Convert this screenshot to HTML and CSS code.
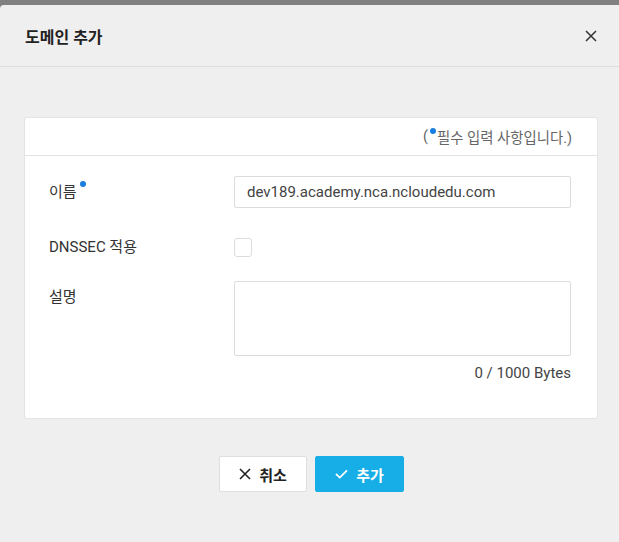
FILE: index.html
```html
<!DOCTYPE html>
<html lang="ko">
<head>
<meta charset="utf-8">
<link rel="stylesheet" href="styles.css">
</head>
<body>
<div class="dialog">
  <div class="dlg-header">
    <h1 class="dlg-title">도메인 추가</h1>
    <svg class="close" width="12" height="12" viewBox="0 0 12 12"><path d="M1 1L11 11M11 1L1 11" stroke="#333" stroke-width="1.5" fill="none"/></svg>
  </div>
  <div class="dlg-body">
    <div class="card">
      <div class="card-head">(<span class="dot"></span>필수 입력 사항입니다.)</div>
      <div class="card-body">
        <div class="row row-name">
          <div class="label">이름<span class="dot dot-label"></span></div>
          <div class="field"><div class="input">dev189.academy.nca.ncloudedu.com</div></div>
        </div>
        <div class="row row-dnssec">
          <div class="label">DNSSEC 적용</div>
          <div class="field field-check"><span class="checkbox"></span></div>
        </div>
        <div class="row row-desc">
          <div class="label">설명</div>
          <div class="field">
            <div class="textarea"></div>
            <div class="bytes">0 / 1000 Bytes</div>
          </div>
        </div>
      </div>
    </div>
    <div class="actions">
      <button class="btn btn-cancel"><svg width="12" height="12" viewBox="0 0 12 12"><path d="M1 1L11 11M11 1L1 11" stroke="#222" stroke-width="1.6" fill="none"/></svg>취소</button>
      <button class="btn btn-ok"><svg width="13" height="10" viewBox="0 0 13 10"><path d="M1 5L4.8 8.6L12 1.4" stroke="#fff" stroke-width="1.8" fill="none"/></svg>추가</button>
    </div>
  </div>
</div>
</body>
</html>
```
FILE: styles.css
```css
html, body {
  margin: 0;
  padding: 0;
  background: #808080;
  font-family: Roboto, "Noto Sans CJK KR", sans-serif;
  color: #333;
}
body {
  padding-top: 5px;
  height: 537px;
  overflow: hidden;
}
.dialog {
  background: #efefef;
  border-top-left-radius: 4px;
  height: 537px;
}
.dlg-header {
  height: 61px;
  border-bottom: 1px solid #dcdcdc;
  display: flex;
  align-items: center;
  justify-content: space-between;
  padding: 0 22px 0 25px;
}
.dlg-title {
  margin: 0;
  font-size: 16px;
  font-weight: 700;
  color: #222;
}
.close { margin-top: 1px; }
.dlg-body {
  padding: 50px 21px 0 24px;
}
.card {
  background: #fff;
  border: 1px solid #e4e4e4;
  border-radius: 3px;
}
.card-head {
  height: 37px;
  border-bottom: 1px solid #e2e2e2;
  display: flex;
  align-items: center;
  justify-content: flex-end;
  padding-right: 25px;
  font-size: 14.4px;
  color: #666;
}
.dot {
  display: inline-block;
  width: 6px;
  height: 6px;
  border-radius: 50%;
  background: #1a7fde;
  align-self: flex-start;
  margin: 10px 1px 0 2px;
}
.dot-label {
  margin: 0 0 0 3px;
  vertical-align: 10px;
}
.card-body {
  padding: 20px 26px 36px 24px;
}
.row {
  display: flex;
  align-items: flex-start;
}
.row-dnssec { margin-top: 23px; }
.row-desc { margin-top: 18px; }
.label {
  width: 185px;
  line-height: 32px;
  font-size: 15px;
  color: #333;
  flex-shrink: 0;
}
.field { flex: 1; }
.field-check {
  height: 32px;
  display: flex;
  align-items: center;
}
.input {
  height: 30px;
  border: 1px solid #dcdcdc;
  border-radius: 2px;
  padding: 0 12px;
  line-height: 30px;
  font-size: 15px;
  color: #444;
}
.checkbox {
  width: 16px;
  height: 17px;
  border: 1px solid #dcdcdc;
  border-radius: 3px;
  background: #fff;
  display: block;
}
.textarea {
  height: 73px;
  border: 1px solid #dcdcdc;
  border-radius: 2px;
}
.bytes {
  text-align: right;
  font-size: 15px;
  color: #444;
  margin-top: 8px;
  line-height: 18px;
}
.actions {
  display: flex;
  justify-content: center;
  gap: 8px;
  margin-top: 37px;
  padding-left: 1px;
}
.btn {
  height: 36px;
  border-radius: 2px;
  font-family: Roboto, "Noto Sans CJK KR", sans-serif;
  font-size: 15px;
  font-weight: 700;
  display: flex;
  align-items: center;
  justify-content: center;
  gap: 8px;
  padding: 0;
  cursor: pointer;
}
.btn-cancel {
  width: 88px;
  background: #fff;
  border: 1px solid #dedede;
  color: #222;
}
.btn-ok {
  width: 89px;
  background: #17ade6;
  border: 1px solid #17ade6;
  color: #fff;
}
```
